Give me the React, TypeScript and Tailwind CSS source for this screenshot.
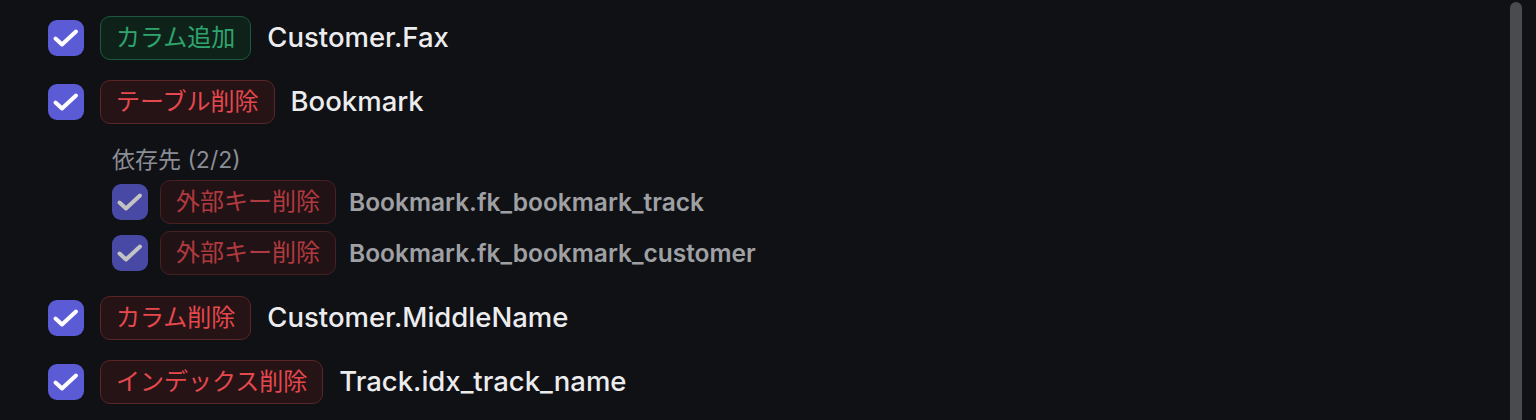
import type { ReactNode } from "react";

type Tone = "add" | "drop";

interface Change {
  id: string;
  kind: string;
  tone: Tone;
  target: string;
  deps?: { id: string; kind: string; target: string }[];
}

const changes: Change[] = [
  { id: "c1", kind: "カラム追加", tone: "add", target: "Customer.Fax" },
  {
    id: "c2",
    kind: "テーブル削除",
    tone: "drop",
    target: "Bookmark",
    deps: [
      { id: "d1", kind: "外部キー削除", target: "Bookmark.fk_bookmark_track" },
      { id: "d2", kind: "外部キー削除", target: "Bookmark.fk_bookmark_customer" },
    ],
  },
  { id: "c3", kind: "カラム削除", tone: "drop", target: "Customer.MiddleName" },
  { id: "c4", kind: "インデックス削除", tone: "drop", target: "Track.idx_track_name" },
];

const font = {
  fontFamily: 'Inter, "Noto Sans CJK JP", "Noto Sans", sans-serif',
};

function Checkbox() {
  return (
    <span className="flex h-[36px] w-[36px] shrink-0 items-center justify-center rounded-[9px] bg-[#5b5bd6]">
      <svg width="36" height="36" viewBox="0 0 36 36" fill="none">
        <path
          d="M7.5 18.5 L14 24.5 L28 11.5"
          stroke="white"
          strokeWidth="4"
          strokeLinecap="round"
          strokeLinejoin="round"
        />
      </svg>
    </span>
  );
}

function Badge({ tone, children }: { tone: Tone; children: ReactNode }) {
  const styles =
    tone === "add"
      ? "border-[#1c5a3f] bg-[#0e2219] text-[#2fa46f]"
      : "border-[#5c2527] bg-[#261316] text-[#e5484d]";
  return (
    <span
      className={`flex h-[44px] shrink-0 items-center rounded-[10px] border px-[15px] text-[24px] ${styles}`}
    >
      {children}
    </span>
  );
}

export default function App() {
  return (
    <div className="relative h-[420px] w-full overflow-hidden bg-[#0f1115]" style={font}>
      <div className="flex flex-col gap-[20px] pl-[48px] pt-[16px]">
        {changes.map((c) => (
          <div key={c.id} className="flex flex-col">
            <div className="flex items-center gap-[16px]">
              <Checkbox />
              <Badge tone={c.tone}>{c.kind}</Badge>
              <span className="text-[27.5px] font-medium text-[#ececee]">{c.target}</span>
            </div>
            {c.deps && (
              <div className="ml-[64px] mt-[22px] mb-[2px] flex flex-col">
                <span className="text-[23px] leading-[28px] text-[#8b8d96]">
                  依存先 ({c.deps.length}/{c.deps.length})
                </span>
                <div className="mt-[7px] flex flex-col gap-[9px] opacity-75">
                  {c.deps.map((d) => (
                    <div key={d.id} className="flex h-[42px] items-center gap-[12px]">
                      <Checkbox />
                      <Badge tone="drop">{d.kind}</Badge>
                      <span className="ml-[1px] text-[24.5px] font-semibold text-[#d0d0d4]">
                        {d.target}
                      </span>
                    </div>
                  ))}
                </div>
              </div>
            )}
          </div>
        ))}
      </div>
      {/* overlay scrollbar thumb */}
      <div className="absolute right-[14px] top-[2px] h-[440px] w-[12px] rounded-full bg-[#4a4b4f]" />
    </div>
  );
}
